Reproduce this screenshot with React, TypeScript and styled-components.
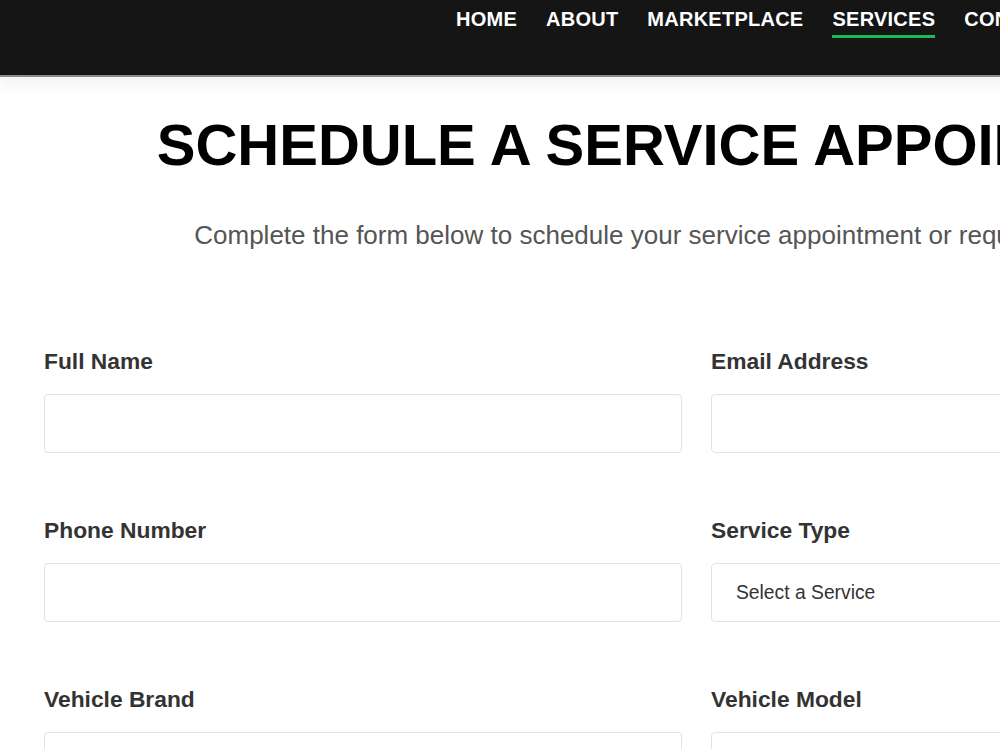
import React from "react";
import styled, { createGlobalStyle } from "styled-components";

const Global = createGlobalStyle`
  html, body { margin: 0; padding: 0; overflow: hidden; background: #fff; }
  body { font-family: "Liberation Sans", Arial, Helvetica, sans-serif; }
  * { box-sizing: border-box; }
`;

const Page = styled.div`
  width: 1393px;
  background: #fff;
`;

const Header = styled.header`
  height: 77px;
  background: #151515;
  border-bottom: 2px solid #8a8a8a;
  box-shadow: 0 4px 18px rgba(0, 0, 0, 0.08);
  position: relative;
  z-index: 1;
`;

const Nav = styled.nav`
  display: flex;
  gap: 29px;
  padding-left: 456px;
  padding-top: 8px;
`;

const NavItem = styled.a<{ $active?: boolean }>`
  color: #fff;
  font-weight: 700;
  font-size: 20px;
  letter-spacing: 0.25px;
  line-height: 23px;
  text-decoration: none;
  padding-bottom: 4px;
  border-bottom: 3px solid ${(p) => (p.$active ? "#1db954" : "transparent")};
  white-space: nowrap;
`;

const Main = styled.main`
  padding: 32px 44px 0;
`;

const Title = styled.h1`
  margin: 0 0 0 -1px;
  text-align: center;
  font-size: 58px;
  line-height: 72px;
  font-weight: 700;
  color: #000;
  white-space: nowrap;
`;

const Subtitle = styled.p`
  margin: 39px 0 0;
  text-align: center;
  font-size: 26px;
  line-height: 30px;
  color: #555;
  white-space: nowrap;
`;

const Form = styled.form`
  display: grid;
  grid-template-columns: 1fr 1fr;
  column-gap: 29px;
  row-gap: 64px;
  margin-top: 98px;
`;

const Field = styled.div`
  display: flex;
  flex-direction: column;
  gap: 20px;
`;

const Label = styled.label`
  font-size: 22.8px;
  line-height: 26px;
  font-weight: 700;
  color: #333;
`;

const Input = styled.input`
  height: 59px;
  border: 1px solid #e2e2e2;
  border-radius: 4px;
  background: #fff;
  padding: 0 24px;
  font-size: 19px;
  font-family: inherit;
  outline: none;
`;

const Select = styled.div`
  height: 59px;
  border: 1px solid #e2e2e2;
  border-radius: 4px;
  background: #fff;
  padding: 0 24px;
  display: flex;
  align-items: center;
  font-size: 19.3px;
  color: #333;
`;

export default function App() {
  return (
    <Page>
      <Global />
      <Header>
        <Nav>
          <NavItem href="#">HOME</NavItem>
          <NavItem href="#">ABOUT</NavItem>
          <NavItem href="#">MARKETPLACE</NavItem>
          <NavItem href="#" $active>SERVICES</NavItem>
          <NavItem href="#">CONTACT</NavItem>
        </Nav>
      </Header>
      <Main>
        <Title>SCHEDULE A SERVICE APPOINTMENT</Title>
        <Subtitle>
          Complete the form below to schedule your service appointment or request a free quote.
        </Subtitle>
        <Form>
          <Field>
            <Label>Full Name</Label>
            <Input type="text" />
          </Field>
          <Field>
            <Label>Email Address</Label>
            <Input type="email" />
          </Field>
          <Field>
            <Label>Phone Number</Label>
            <Input type="tel" />
          </Field>
          <Field>
            <Label>Service Type</Label>
            <Select>Select a Service</Select>
          </Field>
          <Field>
            <Label>Vehicle Brand</Label>
            <Input type="text" />
          </Field>
          <Field>
            <Label>Vehicle Model</Label>
            <Input type="text" />
          </Field>
        </Form>
      </Main>
    </Page>
  );
}
